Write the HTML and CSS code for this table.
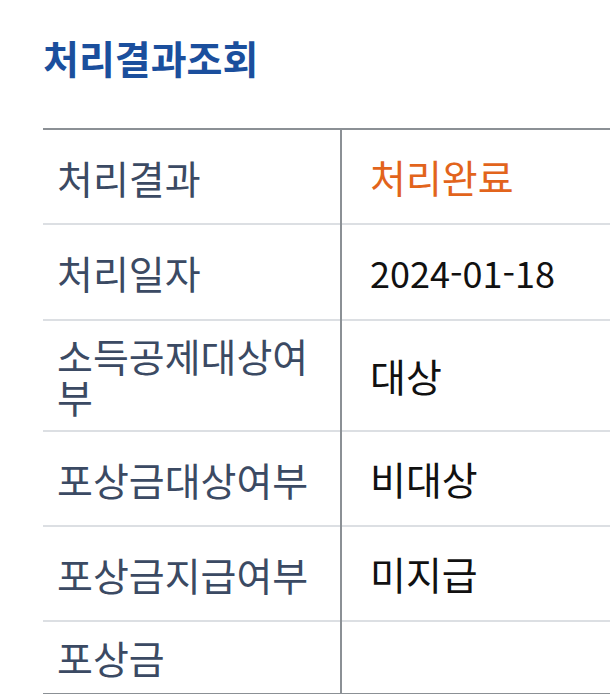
FILE: index.html
```html
<!DOCTYPE html>
<html lang="ko">
<head>
<meta charset="utf-8">
<link rel="stylesheet" href="styles.css">
</head>
<body>
<div class="page">
  <h1 class="title">처리결과조회</h1>
  <table class="result">
    <tbody>
      <tr><th>처리결과</th><td class="done">처리완료</td></tr>
      <tr><th>처리일자</th><td><span class="num">2024-01-18</span></td></tr>
      <tr><th>소득공제대상여부</th><td>대상</td></tr>
      <tr><th>포상금대상여부</th><td>비대상</td></tr>
      <tr><th>포상금지급여부</th><td>미지급</td></tr>
      <tr class="last"><th>포상금</th><td class="empty"></td></tr>
    </tbody>
  </table>
</div>
</body>
</html>
```

FILE: styles.css
```css
html, body {
  margin: 0;
  padding: 0;
  background: #ffffff;
  overflow: hidden;
}
.page {
  padding: 28px 0 0 43px;
  font-family: "Noto Sans CJK KR", "Noto Sans", sans-serif;
}
.title {
  margin: 0;
  font-size: 39px;
  font-weight: 700;
  line-height: 58px;
  color: #1b4f9d;
}
.result {
  margin-top: 42px;
  width: 567px;
  border-collapse: collapse;
  border-top: 2px solid #8b9095;
  border-bottom: 2px solid #8b9095;
}
.result tr {
  border-bottom: 2px solid #dcdfe3;
}
.result tr:last-child {
  border-bottom: none;
}
.result th {
  width: 298px;
  box-sizing: border-box;
  text-align: left;
  font-weight: 400;
  font-size: 39px;
  line-height: 41px;
  color: #3b4a63;
  padding: 14px 16px 13px 14px;
  border-right: 2px solid #8b9095;
  vertical-align: middle;
}
.result tr.last th {
  padding-top: 15px;
  padding-bottom: 15px;
}
.result td {
  font-size: 39px;
  line-height: 41px;
  color: #111111;
  padding: 26px 10px 26px 28px;
  vertical-align: middle;
}
.result td .num {
  font-size: 36px;
}
.result td.done {
  color: #e2641c;
}
.result td.empty {
  padding: 0;
}
```
